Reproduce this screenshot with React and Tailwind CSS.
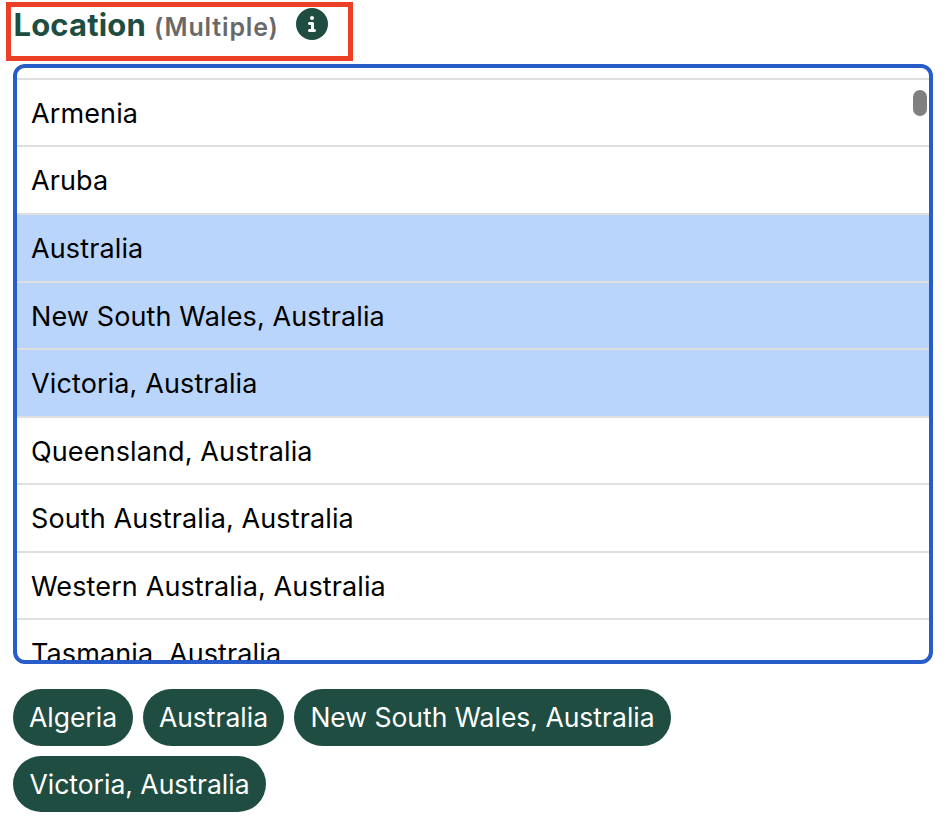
import { FaCircleInfo } from "react-icons/fa6";

const options = [
  { label: "Armenia", row: "h-[67px]" },
  { label: "Aruba", row: "h-[68px]" },
  { label: "Australia", row: "h-[68px] bg-[#b9d5fb]" },
  { label: "New South Wales, Australia", row: "h-[67px] bg-[#b9d5fb]" },
  { label: "Victoria, Australia", row: "h-[68px] bg-[#b9d5fb]" },
  { label: "Queensland, Australia", row: "h-[67px]" },
  { label: "South Australia, Australia", row: "h-[68px]" },
  { label: "Western Australia, Australia", row: "h-[67px]" },
  { label: "Tasmania, Australia", row: "h-[68px]" },
];

const chips = [
  { label: "Algeria", size: "h-[57px] w-[120px]" },
  { label: "Australia", size: "h-[57px] w-[141px]" },
  { label: "New South Wales, Australia", size: "h-[57px] w-[377px]" },
  { label: "Victoria, Australia", size: "h-[56px] w-[253px]" },
];

export default function App() {
  return (
    <main className="h-[838px] w-[948px] overflow-hidden bg-white pt-[2px] font-['Inter',sans-serif] text-[27px] text-black">
      <header className="ml-[6px] flex h-[59px] w-[347px] items-start border-[5px] border-[#eb4026] pl-[2.5px]">
        <h1 className="flex items-baseline whitespace-nowrap leading-[36px]">
          <span className="w-[140.5px] text-[31px] font-bold tracking-[0.15px] text-[#204d41]">Location</span>
          <span className="w-[142px] text-[25px] font-semibold tracking-[0.85px] text-[#696969]">(Multiple)</span>
        </h1>
        <FaCircleInfo className="mt-px size-[32px] shrink-0 text-[#204d41]" />
      </header>

      <section className="relative ml-[13px] mt-[3px] h-[600px] w-[920px] overflow-hidden rounded-[12px] border-4 border-[#285dc9] pt-[10px]">
        <ul className="border-t-2 border-[#dfdfdf]">
          {options.map((option) => (
            <li
              key={option.label}
              className={`flex items-start whitespace-nowrap border-b-2 border-[#dfdfdf] pl-[14px] leading-[67px] tracking-[0.12px] ${option.row}`}
            >
              {option.label}
            </li>
          ))}
        </ul>
        <span className="absolute right-[2px] top-[22px] h-[26px] w-[14px] rounded-full bg-[#808080]" />
      </section>

      <div className="ml-[13px] mt-[25px] flex w-[920px] flex-wrap gap-[10px]">
        {chips.map((chip) => (
          <span
            key={chip.label}
            className={`flex items-start justify-center whitespace-nowrap rounded-full bg-[#204d41] text-[26.5px] leading-[56px] text-white ${chip.size}`}
          >
            {chip.label}
          </span>
        ))}
      </div>
    </main>
  );
}
